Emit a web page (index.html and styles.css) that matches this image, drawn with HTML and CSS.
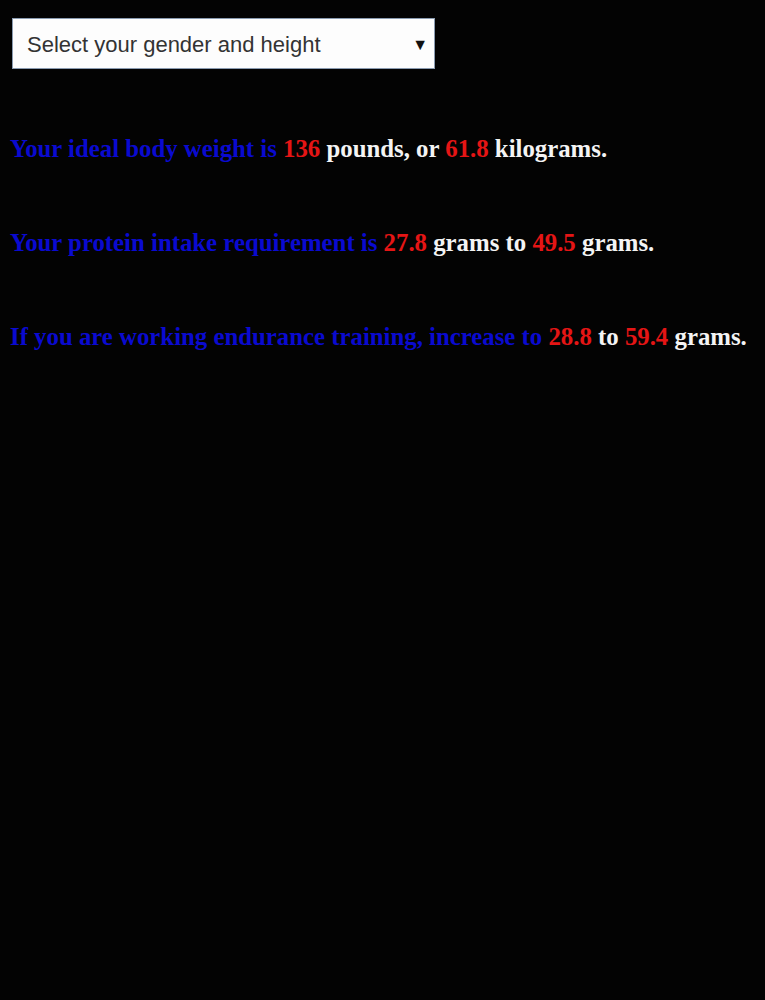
FILE: index.html
```html
<!DOCTYPE html>
<html>
<head>
<meta charset="utf-8">
<link rel="stylesheet" href="styles.css">
</head>
<body>
<div class="picker">
  <div class="select"><span class="label">Select your gender and height</span><span class="arrow">&#9660;</span></div>
</div>
<p class="line"><span class="b">Your ideal body weight is</span> <span class="r">136</span> pounds, or <span class="r">61.8</span> kilograms.</p>
<p class="line"><span class="b">Your protein intake requirement is</span> <span class="r">27.8</span> grams to <span class="r">49.5</span> grams.</p>
<p class="line"><span class="b">If you are working endurance training, increase to</span> <span class="r">28.8</span> to <span class="r">59.4</span> grams.</p>
</body>
</html>
```
FILE: styles.css
```css
html, body { background: #030303; }
body { margin: 0; padding: 18px 10px 0 10px; font-family: "Liberation Serif", "Times New Roman", serif; }
.picker { padding-left: 2px; }
.select {
  width: 423px; height: 51px; box-sizing: border-box;
  background: #fdfdfd; border: 1px solid #8a9bb0;
  display: flex; align-items: center; justify-content: space-between;
  padding: 2px 6px 0 14px;
  font-family: "Liberation Sans", Arial, sans-serif; font-size: 22px; color: #333;
}
.arrow { font-size: 16px; color: #111; }
.line { margin: 0; color: #f4f4f4; font-weight: bold; font-size: 24.8px; line-height: 28px; }
.picker + .line { margin-top: 66px; }
.line + .line { margin-top: 66px; }
.b { color: #0a0ad0; }
.r { color: #e51515; }
```
